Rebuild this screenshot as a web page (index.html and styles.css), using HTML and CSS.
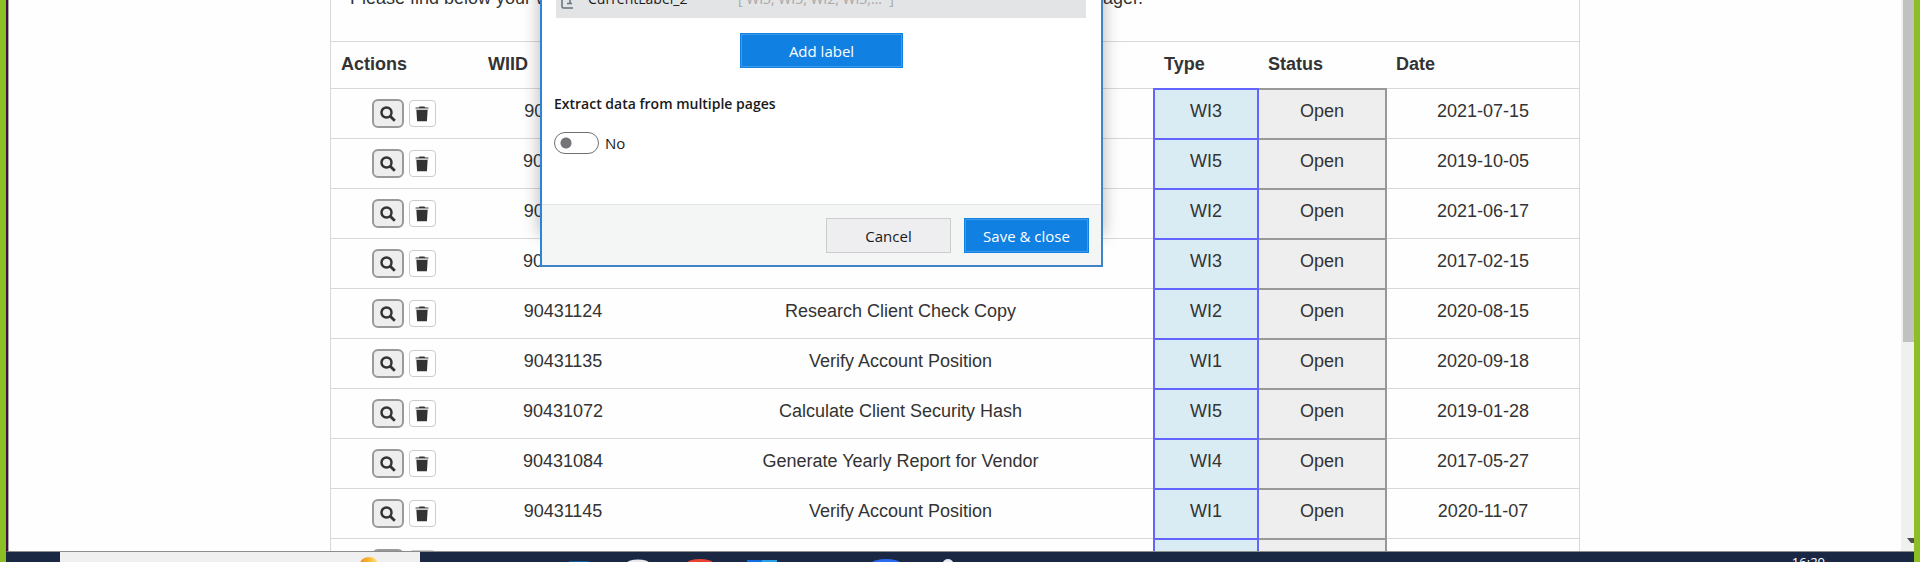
FILE: index.html
```html
<!DOCTYPE html>
<html lang="en">
<head>
<meta charset="utf-8">
<title>Work Items</title>
<link rel="stylesheet" href="styles.css">
</head>
<body>
<svg class="sprite" aria-hidden="true">
  <symbol id="search" viewBox="0 0 16 16">
    <circle cx="6.5" cy="6.5" r="5" fill="none" stroke="#333" stroke-width="2.5"/>
    <path d="M10 10L14.8 14.8" stroke="#333" stroke-width="2.800"/>
  </symbol>
  <symbol id="trash" viewBox="0 0 14 16">
    <path d="M4.5 0.4h5l.6 1h3.3v1.2H.6V1.400h3.300z" fill="#333"/>
    <path d="M.6 2.600h12.800v1H.6z" fill="#aaa"/>
    <path d="M1.400 4h11.200l-.7 11.200H2.100z" fill="#333"/>
  </symbol>
</svg>
<div class="desktop">
  <div class="workspace">
    <main class="page">
      <section class="panel">
        <p class="intro"><span>Please find below your work items</span><span>assigned by your manager.</span></p>
        <table class="items">
          <colgroup><col class="c-actions"><col class="c-id"><col><col class="c-type"><col class="c-status"><col class="c-date"></colgroup>
          <thead><tr><th>Actions</th><th>WIID</th><th>Description</th><th>Type</th><th>Status</th><th>Date</th></tr></thead>
          <tbody id="rows"></tbody>
        </table>
      </section>
    </main>
    <div class="scrollbar" aria-hidden="true">
      <div class="thumb"></div>
      <svg class="arrow" viewBox="0 0 7 6"><path d="M0 0h7v5H4z" fill="#505050"/></svg>
    </div>
    <section class="dialog" role="dialog" aria-label="Extract data">
      <div class="label-row">
        <svg class="doc" viewBox="0 0 14 16"><path d="M1 0v13.500q0 1.500 1.500 1.500H12M9 0v10M6 10.500h5" fill="none" stroke="#66727c" stroke-width="1.500"/></svg>
        <span class="label-name">CurrentLabel_2</span>
        <span class="label-value">[ WI3, WI5, WI2, WI3,...&nbsp; ]</span>
      </div>
      <button class="btn primary add">Add label</button>
      <h2 class="heading" id="multi">Extract data from multiple pages</h2>
      <label class="switch"><input type="checkbox" role="switch" aria-describedby="multi">No</label>
      <footer class="actions">
        <button class="btn">Cancel</button>
        <button class="btn primary">Save &amp; close</button>
      </footer>
    </section>
  </div>
  <div class="taskbar">
    <div class="searchbox">
      <svg viewBox="0 0 18 5"><defs><linearGradient id="sun"><stop offset="0" stop-color="#f08a1c"/><stop offset=".6" stop-color="#fbc23c"/><stop offset="1" stop-color="#fde68a"/></linearGradient></defs><ellipse cx="9" cy="7" rx="9" ry="7" fill="url(#sun)"/></svg>
    </div>
    <svg class="apps" viewBox="0 1 400 10">
      <path d="M0 10h20v1H0z" fill="#0f5d9c"/>
      <ellipse cx="69" cy="12" rx="11" ry="3.500" fill="#e8eaee"/>
      <ellipse cx="131" cy="12" rx="13" ry="4" fill="#ea4335"/>
      <path d="M178 9h15v2h-15z" fill="#0f6fe0"/><path d="M193 9h15v2h-15z" fill="#28a0ea"/>
      <ellipse cx="317" cy="12" rx="14" ry="4" fill="#2a6cf0"/>
      <ellipse cx="379" cy="12" rx="5" ry="4" fill="#e8eaee"/>
    </svg>
    <time class="clock">16:20</time>
  </div>
</div>
<script src="rows.js"></script>
</body>
</html>
```
FILE: styles.css
```css
* { box-sizing: border-box; }
body { margin: 0; background: #8cbf26; }
.sprite { position: absolute; width: 0; height: 0; }
.desktop {
  height: 100vh;
  padding: 0 6px;
  display: flex;
  flex-direction: column;
  overflow: hidden;
  font-family: "Liberation Sans", Arial, sans-serif;
  font-size: 18px;
  line-height: 26px;
  color: #333;
}
.workspace {
  position: relative;
  flex: 1;
  min-height: 0;
  display: flex;
  overflow: hidden;
  background: #fefefe;
  border-left: 2px solid #3a1040;
  border-bottom: 1px solid #8a8d8a;
}
.page { flex: 1; border-left: 1px solid #aaa; overflow: hidden; }
.panel {
  max-width: 1250px;
  margin: -16px auto 0;
  border: 1px solid #d8d8d8;
}
.intro {
  display: flex;
  justify-content: space-between;
  margin: 0;
  padding: 0 436px 30px 19px;
}
.items { width: 100%; border-collapse: collapse; table-layout: fixed; }
.c-actions { width: 147px; }
.c-id { width: 170px; }
.c-type { width: 104px; }
.c-status { width: 128px; }
.c-date { width: 193px; }
.items th { height: 47px; padding: 0 10px 2px; text-align: left; border-top: 1px solid #d8d8d8; }
.items td {
  height: 50px;
  padding: 9px 10px 0;
  text-align: center;
  vertical-align: top;
  border-top: 1px solid #d8d8d8;
}
.items .type { padding-top: 8px; background: #daecf3; border: 2px solid #6464ff; }
.items .status { padding-top: 8px; background: #eee; border: 2px solid #999; }
.tools { display: flex; justify-content: center; align-items: center; gap: 5px; padding: 1px 2px 0 0; }
.tool {
  width: 27px;
  height: 27px;
  padding: 0;
  display: grid;
  place-items: center;
  background: #fff;
  border: 1px solid #ccc;
  border-radius: 4px;
}
.tool svg { width: 14px; height: 16px; }
.tool.view { width: 32px; height: 29px; background: #eee; border: 2px solid #999; border-radius: 6px; }
.tool.view svg { width: 16px; height: 16px; }

.scrollbar {
  width: 13px;
  padding-left: 2px;
  background: #f0f0f0;
  display: flex;
  flex-direction: column;
  justify-content: space-between;
}
.thumb { height: 62%; background: #c1c1c1; }
.arrow { width: 7px; height: 6px; margin: 0 0 7px auto; }

.dialog {
  position: absolute;
  top: -20px;
  left: 532px;
  width: 563px;
  display: flex;
  flex-direction: column;
  background: #fff;
  border: 2px solid #4183c8;
  border-left-color: #2b84da;
  box-shadow: 0 -32px 16px rgba(0, 0, 0, .3);
  font-family: "Open Sans", "Noto Sans", sans-serif;
  font-size: 14px;
  line-height: 20px;
  color: #1a1a1a;
}
.label-row {
  display: flex;
  align-items: flex-end;
  height: 36px;
  margin: 0 15px 0 14px;
  padding: 0 5px 9px;
  background: #e3e4e6;
}
.doc { width: 14px; height: 16px; margin-right: 13px; }
.label-name { width: 150px; }
.label-value { color: #a8a8a8; }
.btn {
  width: 125px;
  height: 35px;
  padding: 0;
  font: inherit;
  font-size: 15px;
  color: #1a1a1a;
  background: #eeedf0;
  border: 1px solid #ccc;
}
.btn.primary { color: #fff; background: #1080e2; border-color: #1080e2; box-shadow: inset 0 0 0 1px #3f99e9; }
.add { width: 163px; margin: 15px 0 0 198px; }
.heading { margin: 26px 12px 0; font-size: 14px; font-weight: 600; line-height: 20px; }
.switch { display: flex; align-items: center; gap: 6px; height: 22px; margin: 18px 12px 50px; font-size: 15px; }
.switch input {
  appearance: none;
  width: 45px;
  height: 22px;
  margin: 0;
  border: 1px solid #707070;
  border-radius: 11px;
  background: radial-gradient(circle at 11px 50%, #757579 5px, transparent 6px);
}
.actions {
  display: flex;
  justify-content: flex-end;
  gap: 13px;
  padding: 13px 12px 12px;
  background: #f4f6f6;
  border-top: 1px solid #e2e3e4;
}

.taskbar { height: 10px; display: flex; overflow: hidden; background: #1a2844; }
.searchbox { width: 360px; margin-left: 54px; background: #f0f0f0; display: flex; justify-content: flex-end; align-items: flex-end; padding-right: 42px; }
.searchbox svg { width: 18px; height: 5px; }
.apps { width: 400px; height: 10px; margin-left: 149px; }
.clock { margin: 2px 89px 0 auto; font: 13px/16px "Open Sans", sans-serif; color: #fff; }
```
FILE: rows.js
```js
const items = [
  ["90431118", "Verify Account Position", "WI3", "2021-07-15"],
  ["90431092", "Calculate Client Security Hash", "WI5", "2019-10-05"],
  ["90431107", "Research Client Check Copy", "WI2", "2021-06-17"],
  ["90431063", "Process Vendor Invoice", "WI3", "2017-02-15"],
  ["90431124", "Research Client Check Copy", "WI2", "2020-08-15"],
  ["90431135", "Verify Account Position", "WI1", "2020-09-18"],
  ["90431072", "Calculate Client Security Hash", "WI5", "2019-01-28"],
  ["90431084", "Generate Yearly Report for Vendor", "WI4", "2017-05-27"],
  ["90431145", "Verify Account Position", "WI1", "2020-11-07"],
  ["", "", "", ""]
];
document.getElementById("rows").innerHTML = items.map(([id, text, type, date]) => `
  <tr>
    <td><div class="tools">
      <button class="tool view" aria-label="View"><svg><use href="#search"/></svg></button>
      <button class="tool" aria-label="Delete"><svg><use href="#trash"/></svg></button>
    </div></td>
    <td>${id}</td><td>${text}</td>
    <td class="type">${type}</td><td class="status">${type && "Open"}</td><td>${date}</td>
  </tr>`).join("");
```
